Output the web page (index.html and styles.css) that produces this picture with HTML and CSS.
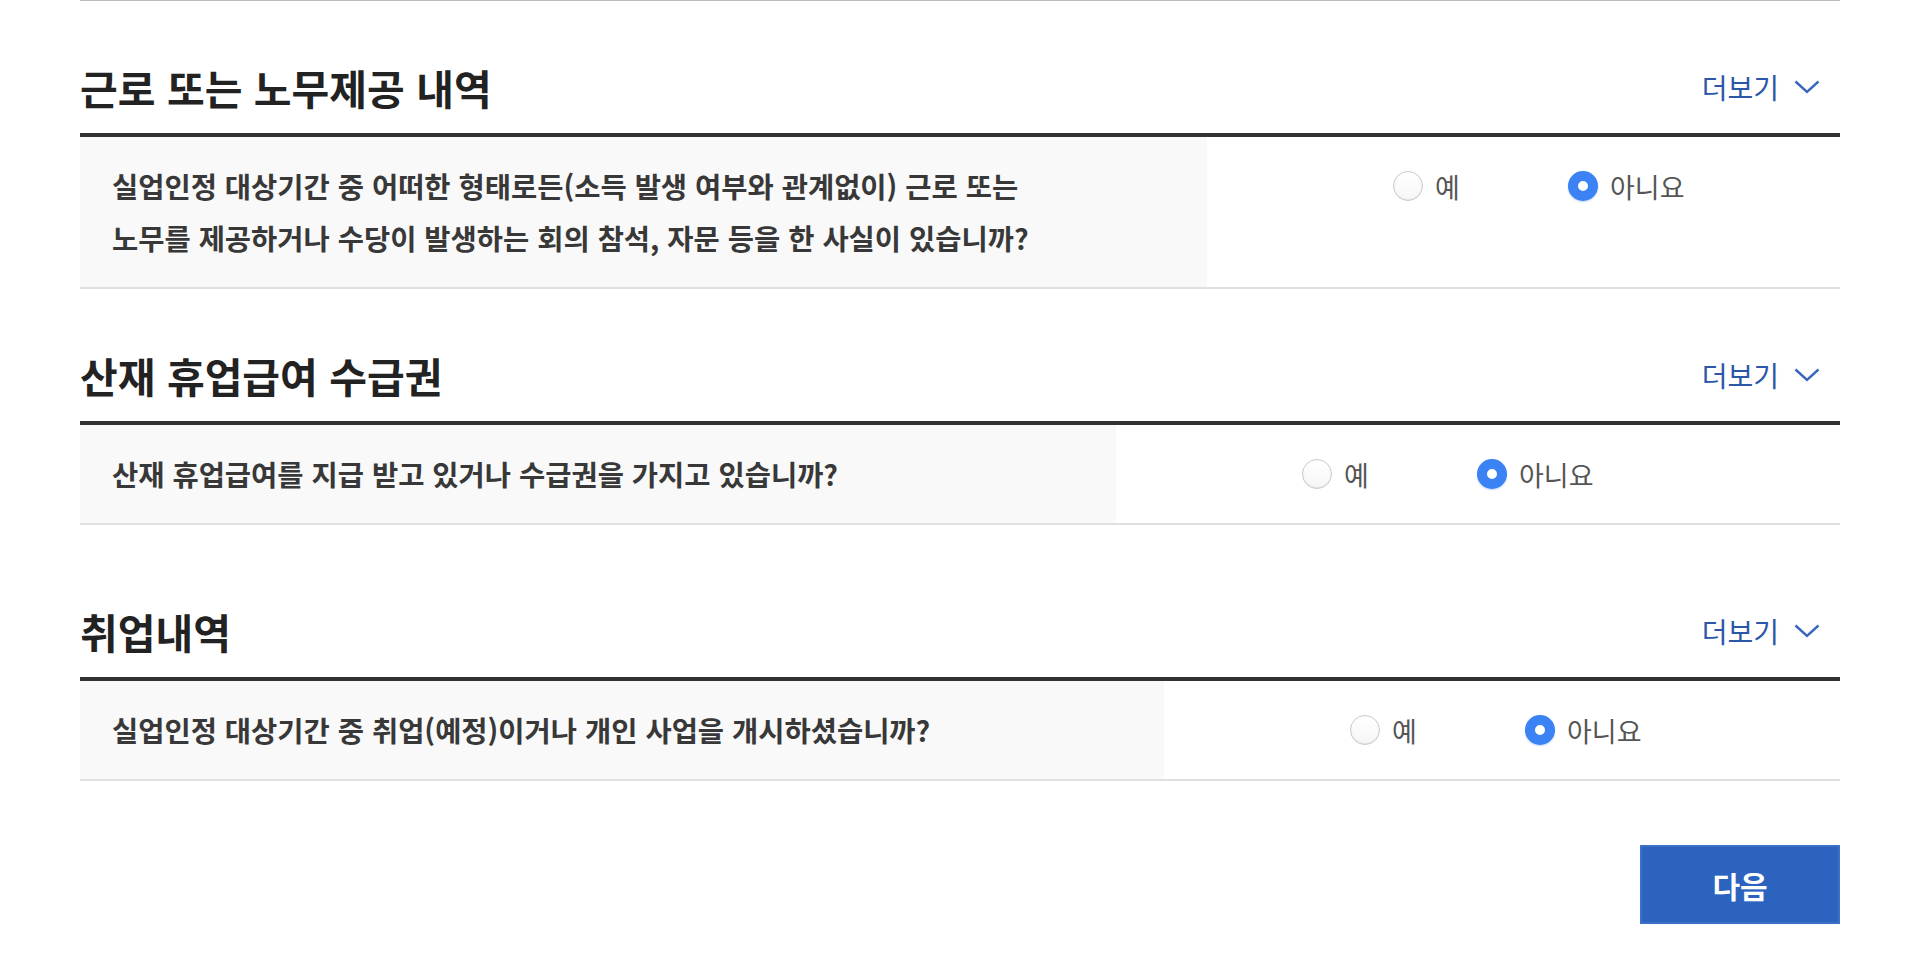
FILE: index.html
```html
<!DOCTYPE html>
<html lang="ko">
<head>
    <meta charset="UTF-8">
    <meta name="viewport" content="width=device-width, initial-scale=1.0">
    <title>실업인정 신청</title>

    <link rel="stylesheet" href="styles.css">
</head>
<body>
    <div class="container">

        <!-- 근로 또는 노무제공 -->
        <section class="section">
            <div class="section-head">
                <h2>근로 또는 노무제공 내역</h2>
                <a class="more" href="#">더보기
                    <svg width="26" height="14" viewBox="0 0 26 14"><path d="M1.5 1.5 L13 12 L24.5 1.5" fill="none" stroke="currentColor" stroke-width="2.4"/></svg>
                </a>
            </div>
            <div class="row">
                <div class="question q-work">
                    실업인정 대상기간 중 어떠한 형태로든(소득 발생 여부와 관계없이) 근로 또는<br>
                    노무를 제공하거나 수당이 발생하는 회의 참석, 자문 등을 한 사실이 있습니까?
                </div>
                <div class="answer">
                    <label class="opt"><input type="radio" name="work"> 예</label>
                    <label class="opt"><input type="radio" name="work" checked> 아니요</label>
                </div>
            </div>
        </section>

        <!-- 산재 휴업급여 -->
        <section class="section">
            <div class="section-head">
                <h2>산재 휴업급여 수급권</h2>
                <a class="more" href="#">더보기
                    <svg width="26" height="14" viewBox="0 0 26 14"><path d="M1.5 1.5 L13 12 L24.5 1.5" fill="none" stroke="currentColor" stroke-width="2.4"/></svg>
                </a>
            </div>
            <div class="row">
                <div class="question q-injury">
                    산재 휴업급여를 지급 받고 있거나 수급권을 가지고 있습니까?
                </div>
                <div class="answer">
                    <label class="opt"><input type="radio" name="injury"> 예</label>
                    <label class="opt"><input type="radio" name="injury" checked> 아니요</label>
                </div>
            </div>
        </section>

        <!-- 취업내역 -->
        <section class="section section-wide">
            <div class="section-head">
                <h2>취업내역</h2>
                <a class="more" href="#">더보기
                    <svg width="26" height="14" viewBox="0 0 26 14"><path d="M1.5 1.5 L13 12 L24.5 1.5" fill="none" stroke="currentColor" stroke-width="2.4"/></svg>
                </a>
            </div>
            <div class="row">
                <div class="question q-job">
                    실업인정 대상기간 중 취업(예정)이거나 개인 사업을 개시하셨습니까?
                </div>
                <div class="answer">
                    <label class="opt"><input type="radio" name="job"> 예</label>
                    <label class="opt"><input type="radio" name="job" checked> 아니요</label>
                </div>
            </div>
        </section>

        <div class="actions">
            <button class="btn-next">다음</button>
        </div>
    </div>
</body>
</html>
```

FILE: styles.css
```css
/* General */
body {
    margin: 0;
    padding: 0;
    background: #fff;
    font-family: "Noto Sans CJK KR", "Noto Sans", sans-serif;
    color: #333;
}

.container {
    width: 1760px;
    margin-left: 80px;
    border-top: 1px solid #bbb;
}

/* Section */
.section {
    margin-top: 40px;
}

.section-wide {
    margin-top: 60px;
}

.section-head {
    display: flex;
    justify-content: space-between;
    align-items: center;
    height: 92px;
    border-bottom: 4px solid #333;
}

.section-head h2 {
    margin: 0;
    font-size: 41px;
    font-weight: 700;
    color: #222;
}

.more {
    display: flex;
    align-items: center;
    gap: 15px;
    margin-right: 20px;
    font-size: 28px;
    color: #2c56a8;
    text-decoration: none;
}

.more svg {
    color: #3766bd;
}

/* Question rows */
.row {
    display: flex;
    border-bottom: 2px solid #e0e0e0;
}

.question {
    box-sizing: border-box;
    padding: 23px 32px;
    background: #f9f9f9;
    font-size: 28.5px;
    font-weight: 700;
    line-height: 52px;
    color: #383838;
}

.q-work { width: 1127px; }
.q-injury { width: 1036px; }
.q-job { width: 1084px; }

.answer {
    display: flex;
    align-items: flex-start;
    padding: 23px 0 23px 186px;
}

.opt {
    display: flex;
    align-items: center;
    gap: 12px;
    width: 175px;
    height: 52px;
    font-size: 27px;
    color: #555;
    cursor: pointer;
}

.opt input {
    appearance: none;
    -webkit-appearance: none;
    margin: 0;
    width: 30px;
    height: 30px;
    border-radius: 50%;
    border: 1px solid #c9c9c9;
    background: linear-gradient(to bottom, #fff, #f6f6f6);
    box-shadow: inset 0 -1px 2px rgba(0, 0, 0, 0.06);
    flex-shrink: 0;
}

.opt input:checked {
    border: 10px solid #3b82f4;
    background: #fff;
    box-shadow: 0 1px 2px rgba(40, 110, 230, 0.3);
}

/* Next button */
.actions {
    display: flex;
    justify-content: flex-end;
    margin-top: 64px;
}

.btn-next {
    width: 200px;
    height: 79px;
    background: #2b63bf;
    border: 2px solid #3b72c6;
    color: #fff;
    font-family: inherit;
    font-size: 30px;
    font-weight: 700;
    cursor: pointer;
}
```
